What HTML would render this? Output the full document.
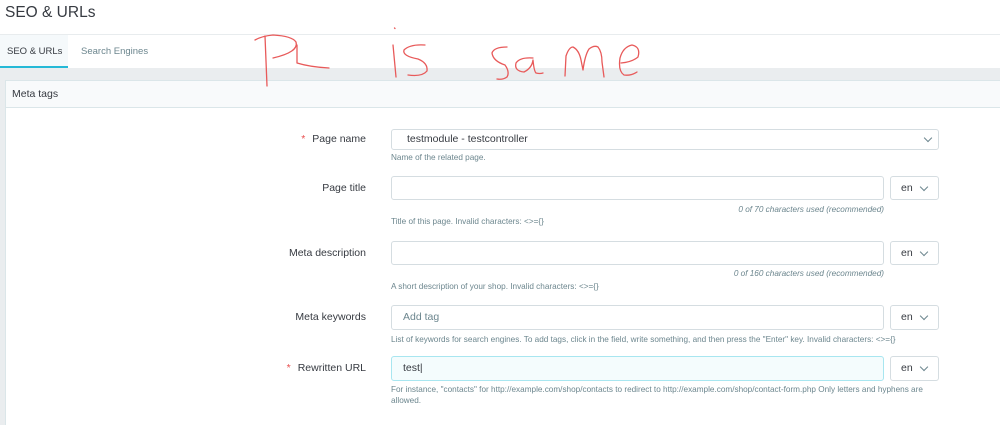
<!DOCTYPE html>
<html><head><meta charset="utf-8"><style>
*{margin:0;padding:0;box-sizing:border-box}
body{width:1000px;height:425px;overflow:hidden;background:#fff;font-family:"Liberation Sans",sans-serif;position:relative;color:#363a41}
.a{position:absolute}
.lbl{position:absolute;right:634px;font-size:10.5px;color:#363a41;white-space:nowrap}
.req{color:#e84e4e;margin-right:7px}
.box{position:absolute;border:1px solid #d5dde1;border-radius:3px;background:#fff}
.en{position:absolute;left:890px;width:49px;border:1px solid #d5dde1;border-radius:3px;background:#fff;font-size:10.5px;color:#363a41;padding-left:10px}
.chev{position:absolute;width:6px;height:6px;border-right:1.5px solid #6c868e;border-bottom:1.5px solid #6c868e;transform:rotate(45deg)}
.help{position:absolute;left:391px;font-size:8.2px;color:#6c868e;white-space:nowrap}
</style></head><body>
<div class="a" style="left:5px;top:4px;font-size:15.5px;color:#363a41">SEO &amp; URLs</div>
<div class="a" style="left:0;top:34px;width:1000px;height:1px;background:#e8ecee"></div>
<div class="a" style="left:0;top:35px;width:68px;height:32px;background:#f5f9fb"></div>
<div class="a" style="left:0;top:66px;width:68px;height:2px;background:#25b9d7"></div>
<div class="a" style="left:7px;top:46px;font-size:9.5px;color:#363a41">SEO &amp; URLs</div>
<div class="a" style="left:81px;top:46px;font-size:9.5px;color:#6c868e">Search Engines</div>
<div class="a" style="left:0;top:68px;width:1000px;height:357px;background:#eaedef"></div>
<div class="a" style="left:5px;top:80px;width:995px;height:345px;background:#fff;border-left:1px solid #dbe6e9;border-top:1px solid #dbe6e9"></div>
<div class="a" style="left:6px;top:81px;width:994px;height:27px;background:#f8fafb;border-bottom:1px solid #dbe6e9"></div>
<div class="a" style="left:12px;top:88px;font-size:10.5px;color:#363a41">Meta tags</div>

<div class="lbl" style="top:133px"><span class="req">*</span>Page name</div>
<div class="box" style="left:391px;top:129px;width:548px;height:21px"></div>
<div class="a" style="left:407px;top:133px;font-size:10.5px">testmodule - testcontroller</div>
<div class="chev" style="left:925px;top:135px"></div>
<div class="help" style="top:153px">Name of the related page.</div>

<div class="lbl" style="top:182px">Page title</div>
<div class="box" style="left:391px;top:176px;width:493px;height:24px"></div>
<div class="en" style="top:176px;height:24px;line-height:22px">en</div><div class="chev" style="left:921px;top:184px"></div>
<div class="help" style="left:0;width:884px;text-align:right;top:205px;font-style:italic">0 of 70 characters used (recommended)</div>
<div class="help" style="top:217px">Title of this page. Invalid characters: &lt;&gt;={}</div>

<div class="lbl" style="top:247px">Meta description</div>
<div class="box" style="left:391px;top:241px;width:493px;height:24px"></div>
<div class="en" style="top:241px;height:24px;line-height:22px">en</div><div class="chev" style="left:921px;top:249px"></div>
<div class="help" style="left:0;width:884px;text-align:right;top:269px;font-style:italic">0 of 160 characters used (recommended)</div>
<div class="help" style="top:282px">A short description of your shop. Invalid characters: &lt;&gt;={}</div>

<div class="lbl" style="top:311px">Meta keywords</div>
<div class="box" style="left:391px;top:305px;width:493px;height:25px"></div>
<div class="a" style="left:403px;top:311px;font-size:10.5px;color:#6c868e">Add tag</div>
<div class="en" style="top:305px;height:25px;line-height:23px">en</div><div class="chev" style="left:921px;top:313px"></div>
<div class="help" style="top:335px">List of keywords for search engines. To add tags, click in the field, write something, and then press the "Enter" key. Invalid characters: &lt;&gt;={}</div>

<div class="lbl" style="top:362px"><span class="req">*</span>Rewritten URL</div>
<div class="box" style="left:391px;top:356px;width:493px;height:25px;background:#f4fcfd;border-color:#a8e6f0"></div>
<div class="a" style="left:403px;top:362px;font-size:10.5px">test|</div>
<div class="en" style="top:356px;height:25px;line-height:23px">en</div><div class="chev" style="left:921px;top:364px"></div>
<div class="help" style="top:385px">For instance, "contacts" for http://example.com/shop/contacts to redirect to http://example.com/shop/contact-form.php Only letters and hyphens are</div>
<div class="help" style="top:396px">allowed.</div>

<svg class="a" style="left:0;top:0" width="1000" height="425" fill="none" stroke="#e85a5a" stroke-width="1.3" stroke-linecap="round" stroke-linejoin="round">
<path d="M265 36 L267 86"/>
<path d="M255 40 Q262 36 273 35 Q292 36 296 42 Q299 52 273 58"/>
<path d="M297 45 L297 63 Q310 67 329 68"/>
<path d="M393 45 L396 77"/><path d="M394.5 28 l0.5 0.5"/>
<path d="M425 45 Q410 44 404 50 Q402 56 418 59 Q428 63 427 71 Q422 77 408 75"/>
<path d="M507 47 Q494 47 492 53 Q493 61 505 65 Q510 72 507 77 Q503 80 497 79"/>
<path d="M533 58 Q520 57 516 63 Q514 71 524 72 Q532 68 533 60 Q534 71 536 73 Q540 74 543 73"/>
<path d="M565 76 L566 56 Q569 47 573 47 Q579 50 581 60 L583 70 Q585 55 589 49 Q594 45 598 47 Q602 52 602 62 L604 77"/>
<path d="M621 63 Q632 62 638 57 Q641 47 632 45 Q623 47 620 58 Q618 71 624 75 Q631 76 637 72"/>
</svg>
</body></html>
